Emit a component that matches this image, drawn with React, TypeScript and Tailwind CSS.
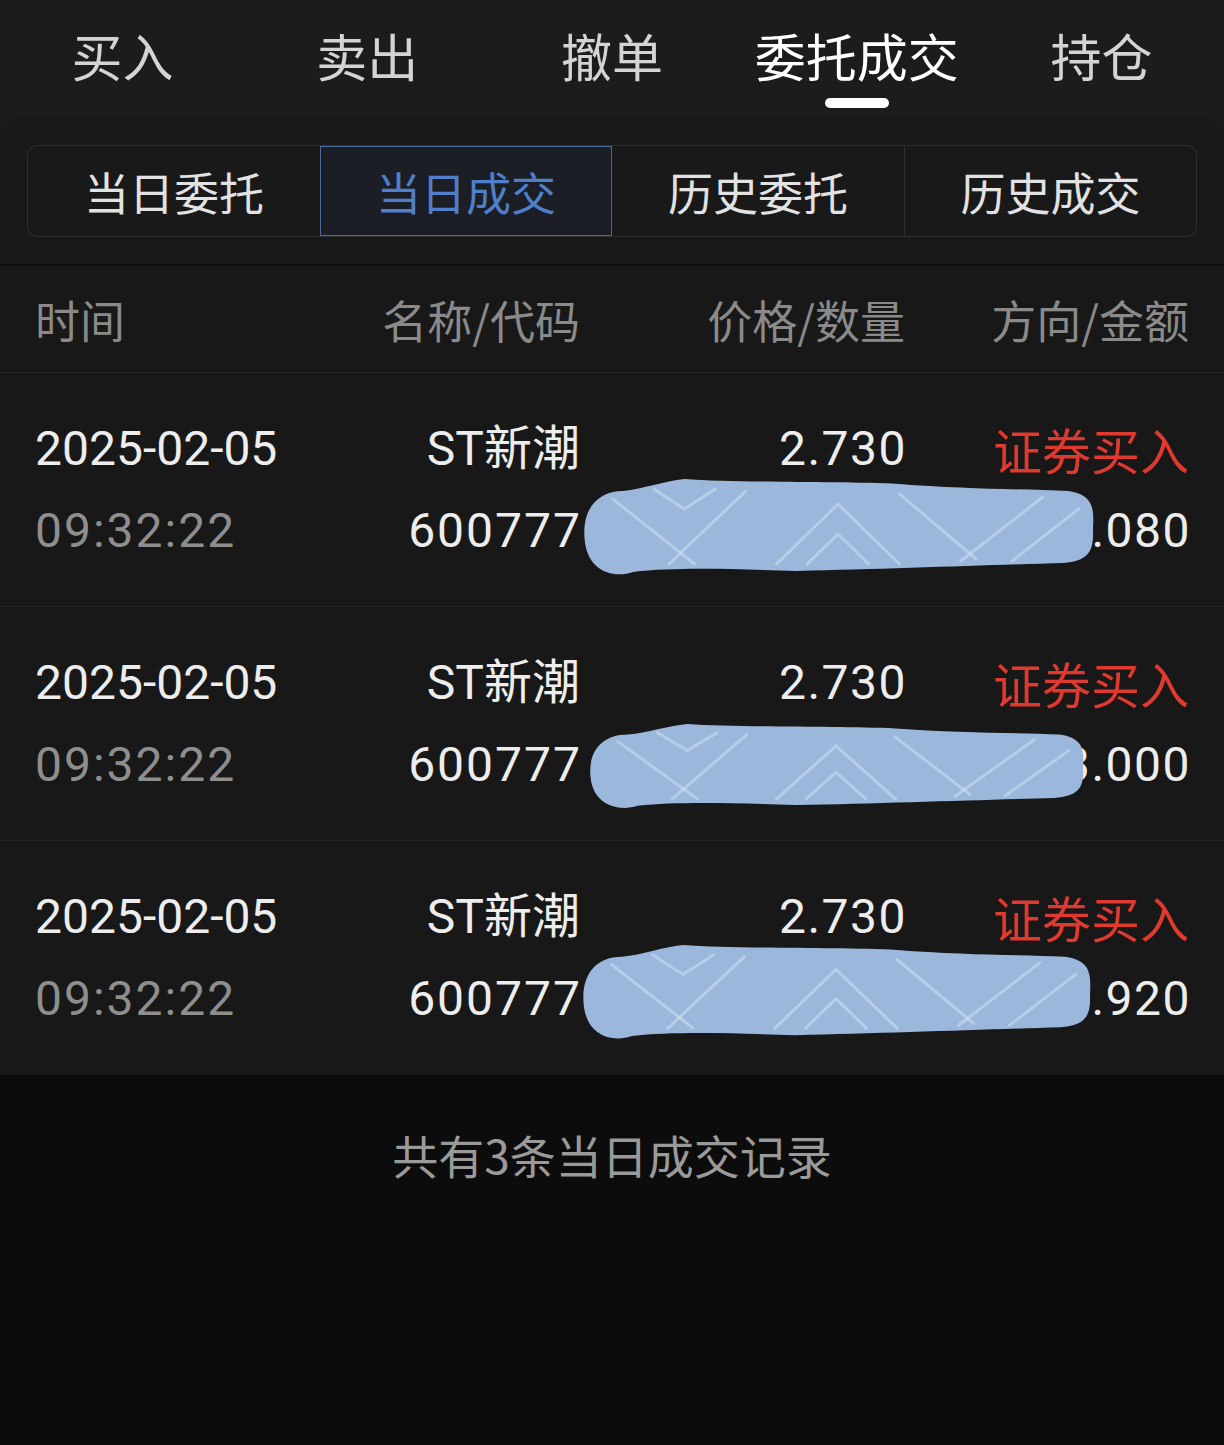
import React from 'react';

const tabs = ['买入', '卖出', '撤单', '委托成交', '持仓'];
const segments = ['当日委托', '当日成交', '历史委托', '历史成交'];

interface Trade {
  date: string;
  time: string;
  name: string;
  code: string;
  price: string;
  side: string;
  amount: string;
  blob: { top: number; left: number; width: number; height: number };
}

const trades: Trade[] = [
  { date: '2025-02-05', time: '09:32:22', name: 'ST新潮', code: '600777', price: '2.730', side: '证券买入', amount: '.080', blob: { top: 106, left: 582, width: 512, height: 100 } },
  { date: '2025-02-05', time: '09:32:22', name: 'ST新潮', code: '600777', price: '2.730', side: '证券买入', amount: '3.000', blob: { top: 117, left: 588, width: 496, height: 88 } },
  { date: '2025-02-05', time: '09:32:22', name: 'ST新潮', code: '600777', price: '2.730', side: '证券买入', amount: '.920', blob: { top: 104, left: 581, width: 510, height: 98 } },
];

// hand-drawn cover over the hidden quantity / amount
function Scribble({ width: w, height: h }: { width: number; height: number }) {
  const x = (f: number) => (f * w).toFixed(1);
  const y = (f: number) => (f * h).toFixed(1);
  const d = [
    `M ${x(0.005)} ${y(0.6)}`,
    `C ${x(0.0)} ${y(0.3)}, ${x(0.03)} ${y(0.12)}, ${x(0.08)} ${y(0.12)}`,
    `C ${x(0.12)} ${y(0.1)}, ${x(0.16)} ${y(0.02)}, ${x(0.2)} ${y(0.0)}`,
    `C ${x(0.3)} ${y(0.04)}, ${x(0.5)} ${y(0.02)}, ${x(0.62)} ${y(0.05)}`,
    `C ${x(0.74)} ${y(0.1)}, ${x(0.86)} ${y(0.1)}, ${x(0.95)} ${y(0.12)}`,
    `C ${x(1.0)} ${y(0.16)}, ${x(1.0)} ${y(0.3)}, ${x(0.998)} ${y(0.5)}`,
    `C ${x(1.0)} ${y(0.72)}, ${x(0.99)} ${y(0.82)}, ${x(0.94)} ${y(0.84)}`,
    `C ${x(0.8)} ${y(0.86)}, ${x(0.6)} ${y(0.9)}, ${x(0.42)} ${y(0.92)}`,
    `C ${x(0.3)} ${y(0.9)}, ${x(0.18)} ${y(0.88)}, ${x(0.1)} ${y(0.93)}`,
    `C ${x(0.06)} ${y(1.0)}, ${x(0.01)} ${y(0.92)}, ${x(0.005)} ${y(0.6)}`,
    'Z',
  ].join(' ');
  return (
    <svg width={w} height={h} viewBox={`0 0 ${w} ${h}`}>
      <path d={d} fill="#9bb8dc" />
      <g stroke="#d6e2f1" strokeWidth="3" strokeOpacity="0.5" strokeLinecap="round" fill="none">
        <path d={`M ${x(0.06)} ${y(0.2)} L ${x(0.22)} ${y(0.85)}`} />
        <path d={`M ${x(0.32)} ${y(0.12)} L ${x(0.17)} ${y(0.85)}`} />
        <path d={`M ${x(0.14)} ${y(0.1)} L ${x(0.2)} ${y(0.3)} L ${x(0.26)} ${y(0.1)}`} />
        <path d={`M ${x(0.38)} ${y(0.85)} L ${x(0.5)} ${y(0.25)} L ${x(0.62)} ${y(0.85)}`} />
        <path d={`M ${x(0.44)} ${y(0.85)} L ${x(0.5)} ${y(0.55)} L ${x(0.56)} ${y(0.85)}`} />
        <path d={`M ${x(0.62)} ${y(0.15)} L ${x(0.77)} ${y(0.8)}`} />
        <path d={`M ${x(0.9)} ${y(0.18)} L ${x(0.74)} ${y(0.82)}`} />
        <path d={`M ${x(0.84)} ${y(0.82)} L ${x(0.97)} ${y(0.3)}`} />
      </g>
    </svg>
  );
}

export default function App() {
  return (
    <div className="w-[1224px] min-h-[1445px] bg-[#0c0c0c] font-['Roboto','Noto_Sans_CJK_SC',sans-serif]">
      <div className="bg-[#1c1c1e]">
        <nav className="grid grid-cols-5 h-[118px]">
          {tabs.map((t) => {
            const active = t === '委托成交';
            return (
              <div key={t} className="flex flex-col items-center pt-[30px]">
                <span
                  className={`font-['Noto_Sans_CJK_SC',sans-serif] text-[51px] leading-none ${
                    active ? 'text-white' : 'text-[#d4d4d4]'
                  }`}
                >
                  {t}
                </span>
                {active && <div className="mt-[17px] h-[10px] w-[64px] rounded-full bg-white" />}
              </div>
            );
          })}
        </nav>

        <div className="rounded-t-[22px] bg-[#19191a] px-[27px] py-[27px]">
          <div className="grid grid-cols-4 h-[92px] rounded-[10px] border border-[#2f2f2f] overflow-hidden">
            {segments.map((s, i) => {
              const active = i === 1;
              return (
                <div
                  key={s}
                  className={`flex items-center justify-center font-['Noto_Sans_CJK_SC',sans-serif] text-[45px] leading-none ${
                    active
                      ? 'border border-[#4a6a9c] bg-[#1b1e25] text-[#4f7fcb]'
                      : `text-[#e2e2e2] ${i === 3 ? 'border-l border-[#2f2f2f]' : ''}`
                  }`}
                >
                  {s}
                </div>
              );
            })}
          </div>
        </div>
      </div>

      <div className="h-[2px] bg-[#0f0f0f]" />

      <div className="bg-[#181818]">
        <div className="grid grid-cols-[250px_295px_325px_284px] items-center h-[107px] px-[35px] border-b border-[#262626] font-['Noto_Sans_CJK_SC',sans-serif] text-[45px] leading-none text-[#8a8a8a]">
          <span>时间</span>
          <span className="text-right">名称/代码</span>
          <span className="text-right">价格/数量</span>
          <span className="text-right">方向/金额</span>
        </div>

        {trades.map((tr, idx) => (
          <div
            key={idx}
            className={`relative grid grid-cols-[250px_295px_325px_284px] px-[35px] pt-[48px] text-[48px] leading-[56px] ${
              idx < trades.length - 1 ? 'pb-[47px] border-b border-[#262626]' : 'pb-[48px]'
            }`}
          >
            <div className="flex flex-col gap-[26px]">
              <span className="text-[#ededed]">{tr.date}</span>
              <span className="tracking-[2px] text-[#8e8e8e]">{tr.time}</span>
            </div>
            <div className="flex flex-col gap-[26px] items-end">
              <span className="text-[#ededed]">{tr.name}</span>
              <span className="tracking-[2px] -mr-[2px] text-[#ededed]">{tr.code}</span>
            </div>
            <div className="flex flex-col gap-[26px] items-end">
              <span className="tracking-[1.5px] -mr-[2px] text-[#ededed]">{tr.price}</span>
              <span className="h-[56px]" />
            </div>
            <div className="flex flex-col gap-[26px] items-end">
              <span className="font-['Noto_Sans_CJK_SC',sans-serif] text-[49px] text-[#e0392f]">{tr.side}</span>
              <span className="tracking-[1.5px] -mr-[2px] text-[#ededed]">{tr.amount}</span>
            </div>
            <div
              className="absolute z-10"
              style={{ top: tr.blob.top, left: tr.blob.left }}
            >
              <Scribble width={tr.blob.width} height={tr.blob.height} />
            </div>
          </div>
        ))}
      </div>

      <div className="flex justify-center pt-[56px] font-['Noto_Sans_CJK_SC',sans-serif] text-[46px] leading-none text-[#9a9a9a]">
        共有3条当日成交记录
      </div>
    </div>
  );
}
